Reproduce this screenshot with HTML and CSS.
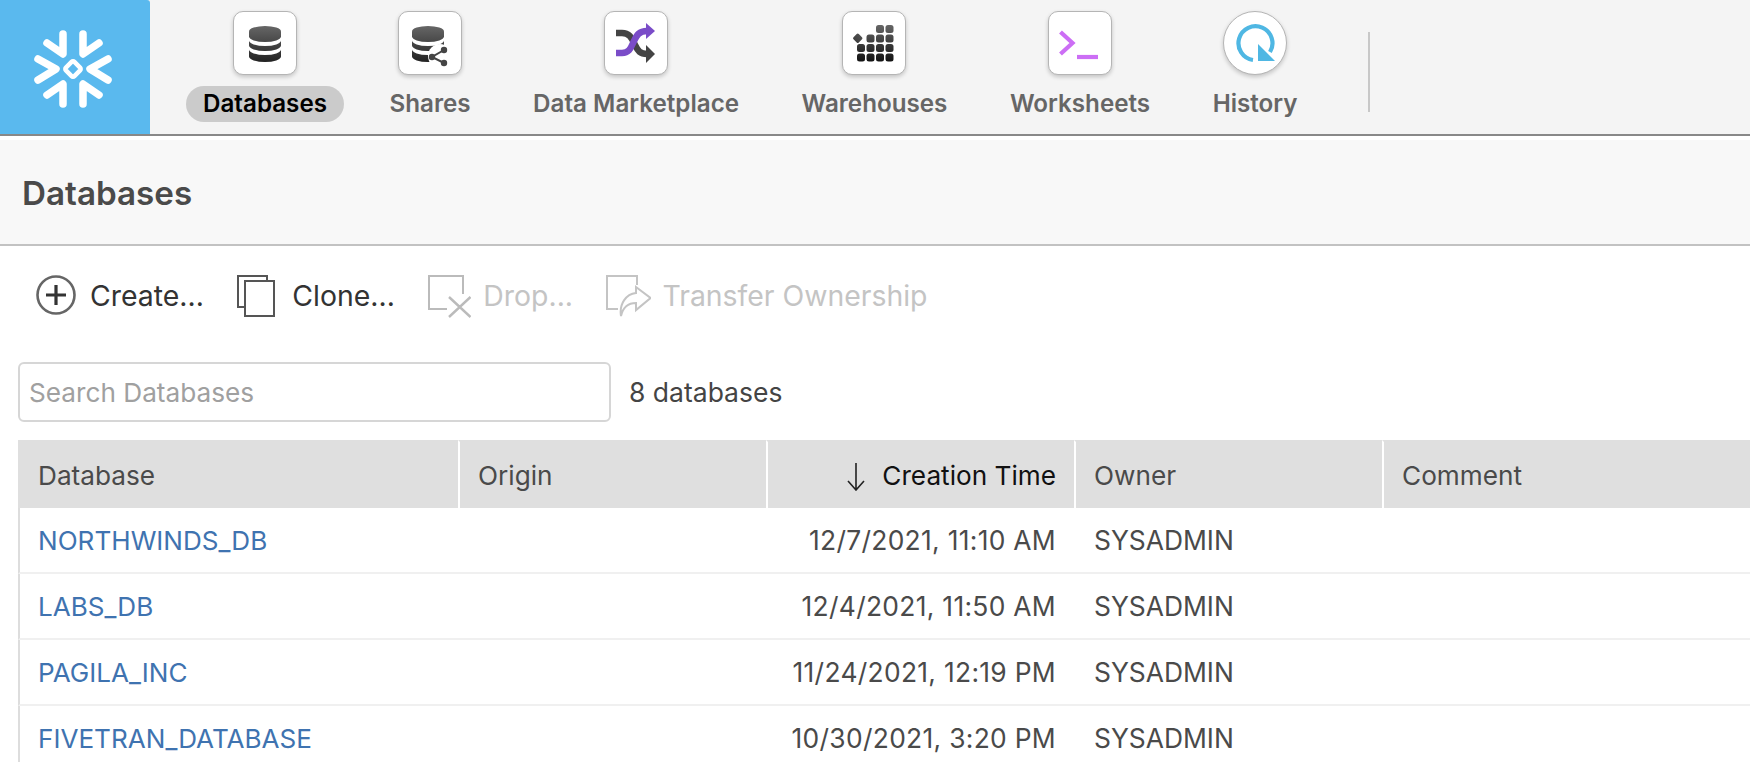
FILE: index.html
```html
<!DOCTYPE html>
<html lang="en">
<head>
  <meta charset="UTF-8" />
  <title>Databases</title>
  <link rel="stylesheet" href="styles.css">
</head>
<body>

<header class="topbar">
  <a class="logo">
    <svg width="150" height="134" viewBox="0 0 150 134" fill="none" stroke="#fff" stroke-width="7.5" stroke-linecap="round" stroke-linejoin="round">
      <path d="M47 43 63 54V34" />
      <path d="M99 43 83 54V34" />
      <path d="M38 59 56 69 38 80" />
      <path d="M108 59 90 69 108 80" />
      <path d="M47 95 63 84V104" />
      <path d="M99 95 83 84V104" />
      <rect x="67" y="63" width="12" height="12" rx="2" stroke-width="4.5" transform="rotate(45 73 69)" />
    </svg>
  </a>
  <nav class="nav">
    <a class="nav-item active">
      <span class="tile">
        <svg width="64" height="64" viewBox="0 0 64 64">
          <defs><linearGradient id="g1" gradientUnits="userSpaceOnUse" x1="0" y1="15" x2="0" y2="51"><stop offset="0" stop-color="#666" /><stop offset="1" stop-color="#222" /></linearGradient></defs>
          <path fill="url(#g1)" d="M16 20.5a16 5.5 0 0 1 32 0v5a16 5.5 0 0 1-32 0z" />
          <path fill="url(#g1)" d="M16 29.5a16 5.5 0 0 0 32 0v5a16 5.5 0 0 1-32 0z" />
          <path fill="url(#g1)" d="M16 38.5a16 5.5 0 0 0 32 0v7a16 5.5 0 0 1-32 0z" />
        </svg>
      </span>
      <span class="nav-label">Databases</span>
    </a>
    <a class="nav-item">
      <span class="tile">
        <svg width="64" height="64" viewBox="0 0 64 64">
          <defs><linearGradient id="g2" gradientUnits="userSpaceOnUse" x1="0" y1="15" x2="0" y2="51"><stop offset="0" stop-color="#666" /><stop offset="1" stop-color="#222" /></linearGradient></defs>
          <path fill="url(#g2)" d="M14 20.5a16 5.5 0 0 1 32 0v5a16 5.5 0 0 1-32 0z" />
          <path fill="url(#g2)" d="M14 29.5a16 5.5 0 0 0 32 0v5a16 5.5 0 0 1-32 0z" />
          <path fill="url(#g2)" d="M14 38.5a16 5.5 0 0 0 32 0v7a16 5.5 0 0 1-32 0z" />
          <circle cx="42" cy="45" r="12" fill="#fff" />
          <path d="M46 39 34 46 46 52" fill="none" stroke="#444" stroke-width="2" />
          <circle cx="46" cy="39" r="3.2" fill="#444" />
          <circle cx="34" cy="46" r="3.2" fill="#444" />
          <circle cx="46" cy="52" r="3.2" fill="#444" />
        </svg>
      </span>
      <span class="nav-label">Shares</span>
    </a>
    <a class="nav-item">
      <span class="tile">
        <svg width="64" height="64" viewBox="0 0 64 64">
          <path d="M12 22h6c8 0 10 6 13 12 3 6 5 9 12 9" fill="none" stroke="#444" stroke-width="6.5" />
          <path d="M42 34 51 43 42 52z" fill="#444" />
          <path d="M12 42h6c8 0 9-6 12-12 3-6 5-10 13-10" fill="none" stroke="#7a4cc8" stroke-width="6.5" />
          <path d="M42 12 51 20 42 28z" fill="#7a4cc8" />
        </svg>
      </span>
      <span class="nav-label">Data Marketplace</span>
    </a>
    <a class="nav-item">
      <span class="tile">
        <svg width="64" height="64" viewBox="0 0 64 64">
          <defs><linearGradient id="g3" gradientUnits="userSpaceOnUse" x1="0" y1="14" x2="0" y2="51"><stop offset="0" stop-color="#666" /><stop offset="1" stop-color="#111" /></linearGradient></defs>
          <g fill="url(#g3)">
            <rect x="34" y="14" width="8" height="8" rx="2.5" /><rect x="43.5" y="14" width="8" height="8" rx="2.5" />
            <rect x="12" y="23.5" width="7.5" height="7.5" rx="1.5" transform="rotate(45 15.75 27.25)" />
            <rect x="24.5" y="23.5" width="8" height="8" rx="2.5" /><rect x="34" y="23.5" width="8" height="8" rx="2.5" /><rect x="43.5" y="23.5" width="8" height="8" rx="2.5" />
            <rect x="15" y="33" width="8" height="8" rx="2.5" /><rect x="24.5" y="33" width="8" height="8" rx="2.5" /><rect x="34" y="33" width="8" height="8" rx="2.5" /><rect x="43.5" y="33" width="8" height="8" rx="2.5" />
            <rect x="15" y="42.5" width="8" height="8" rx="2.5" /><rect x="24.5" y="42.5" width="8" height="8" rx="2.5" /><rect x="34" y="42.5" width="8" height="8" rx="2.5" /><rect x="43.5" y="42.5" width="8" height="8" rx="2.5" />
          </g>
        </svg>
      </span>
      <span class="nav-label">Warehouses</span>
    </a>
    <a class="nav-item">
      <span class="tile">
        <svg width="64" height="64" viewBox="0 0 64 64" fill="none" stroke="#cc6ef5" stroke-width="4.2">
          <path d="M12.5 21 24.5 32 12.5 43" />
          <path d="M29 46H50" />
        </svg>
      </span>
      <span class="nav-label">Worksheets</span>
    </a>
    <a class="nav-item">
      <span class="tile round">
        <svg width="64" height="64" viewBox="0 0 64 64">
          <path d="M30 49A17 17 0 1 1 47 41" fill="none" stroke="#4fb7e3" stroke-width="4.2" />
          <path d="M35 33V50H52z" fill="#4fb7e3" />
        </svg>
      </span>
      <span class="nav-label">History</span>
    </a>
    <span class="nav-sep"></span>
  </nav>
</header>

<div class="page-title"><h1>Databases</h1></div>

<div class="toolbar">
  <a class="tool">
    <svg width="42" height="44" viewBox="0 0 42 44" fill="none">
      <circle cx="20" cy="21" r="18.5" stroke="#666" stroke-width="2.6" />
      <path d="M20 11V31M10 21H30" stroke="#333" stroke-width="3.2" />
    </svg>
    Create...
  </a>
  <a class="tool">
    <svg width="44" height="44" viewBox="0 0 44 44" fill="none" stroke="#555" stroke-width="2">
      <path d="M8 33H2V2H31V7" />
      <rect x="9" y="7" width="29" height="35" fill="#fff" />
    </svg>
    Clone...
  </a>
  <a class="tool off">
    <svg width="44" height="44" viewBox="0 0 44 44" fill="none" stroke="#bbb" stroke-width="2">
      <path d="M20 35H2V2H36V20" />
      <path d="M22 23 43.5 43M43.5 23 22 43" stroke-width="2.4" />
    </svg>
    Drop...
  </a>
  <a class="tool off">
    <svg width="45" height="44" viewBox="0 0 45 44" fill="none" stroke="#c4c4c4" stroke-width="2">
      <path d="M12 35H1V2H31V11" />
      <path d="M30 13 44.5 24 30 36V29C23 29 17 33 15 42 13 30 20 20 30 19z" />
    </svg>
    Transfer Ownership
  </a>
</div>

<div class="search-row">
  <input class="search" type="text" placeholder="Search Databases" />
  <span class="count">8 databases</span>
</div>

<table class="grid">
  <colgroup>
    <col class="col-name"><col class="col-mid"><col class="col-mid"><col class="col-mid"><col>
  </colgroup>
  <thead>
    <tr>
      <th>Database</th>
      <th>Origin</th>
      <th class="num sorted">
        <svg class="sort-arrow" width="20" height="28" viewBox="0 0 20 28" fill="none" stroke="#222" stroke-width="1.6"><path d="M10 0V26M2 18 10 27 18 18" /></svg>
        Creation Time
      </th>
      <th>Owner</th>
      <th>Comment</th>
    </tr>
  </thead>
  <tbody>
    <tr><td><a>NORTHWINDS_DB</a></td><td></td><td class="num">12/7/2021, 11:10 AM</td><td>SYSADMIN</td><td></td></tr>
    <tr><td><a>LABS_DB</a></td><td></td><td class="num">12/4/2021, 11:50 AM</td><td>SYSADMIN</td><td></td></tr>
    <tr><td><a>PAGILA_INC</a></td><td></td><td class="num">11/24/2021, 12:19 PM</td><td>SYSADMIN</td><td></td></tr>
    <tr><td><a>FIVETRAN_DATABASE</a></td><td></td><td class="num">10/30/2021, 3:20 PM</td><td>SYSADMIN</td><td></td></tr>
  </tbody>
</table>

</body>
</html>
```

FILE: styles.css
```css
html, body {
  margin: 0;
  height: 100%;
  overflow: hidden;
}
body {
  font-family: Inter, "Noto Sans", sans-serif;
  font-size: 26.4px;
  color: #4a4a4a;
  background: #fff;
}
.topbar {
  display: flex;
  height: 134px;
  background: #f4f4f4;
  border-bottom: 2px solid #888;
  margin-bottom: 4px;
}
.logo {
  display: block;
  width: 150px;
  height: 134px;
  background: #5ab9ee;
  border-top-right-radius: 3px;
}
.nav {
  display: flex;
  gap: 28.5px;
  padding-left: 36px;
}
.nav-item {
  display: flex;
  flex-direction: column;
  align-items: center;
  padding-top: 11px;
}
.tile {
  display: block;
  width: 64px;
  height: 64px;
  box-sizing: border-box;
  background: #fff;
  border: 1px solid #b5b5b5;
  border-radius: 10px;
  box-shadow: 0 2px 4px rgba(0,0,0,0.2);
  margin-bottom: 11px;
}
.tile svg {
  display: block;
  margin: -1px;
}
.tile.round {
  border-radius: 50%;
}
.nav-label {
  height: 36px;
  line-height: 36px;
  padding: 0 17px;
  border-radius: 18px;
  font-size: 24.2px;
  font-weight: 600;
  color: #666;
  white-space: nowrap;
}
.nav-item.active .nav-label {
  background: #cbcbcb;
  color: #000;
}
.nav-sep {
  width: 2px;
  height: 80px;
  margin: 32px 0 0 25px;
  background: #c8c8c8;
}
.page-title {
  box-sizing: border-box;
  height: 106px;
  display: flex;
  align-items: center;
  padding: 2px 0 0 22px;
  background: #f8f8f8;
  border-bottom: 2px solid #c2c2c2;
}
.page-title h1 {
  margin: 0;
  font-size: 33.2px;
  font-weight: 600;
  color: #4a4a4a;
}
.toolbar {
  display: flex;
  align-items: center;
  gap: 32.5px;
  height: 100px;
  padding-left: 36px;
}
.tool {
  display: flex;
  align-items: center;
  gap: 12px;
  font-size: 28.4px;
  line-height: 40px;
  color: #333;
  white-space: nowrap;
}
.tool.off {
  color: #c4c4c4;
}
.search-row {
  display: flex;
  align-items: center;
  gap: 18px;
  margin: 16px 0 18px 18px;
}
.search {
  width: 593px;
  height: 60px;
  box-sizing: border-box;
  padding: 0 9px;
  border: 2px solid #d6d6d6;
  border-radius: 6px;
  font-family: inherit;
  font-size: 26.2px;
  outline: none;
}
.search::placeholder {
  color: #a0a0a0;
}
.count {
  font-size: 26.5px;
  color: #444;
}
.grid {
  width: 1732px;
  margin-left: 18px;
  table-layout: fixed;
  border-collapse: separate;
  border-spacing: 0;
}
.col-name {
  width: 440px;
}
.col-mid {
  width: 308px;
}
.grid th {
  height: 66px;
  padding: 0 18px;
  font-weight: 400;
  font-size: 26.2px;
  text-align: left;
  background: #dfdfdf;
  border-top: 2px solid #dfdfdf;
  border-left: 2px solid #fff;
  color: #4a4a4a;
}
.grid th:first-child {
  border-left: 0;
  padding-left: 20px;
}
.grid .num {
  text-align: right;
}
.grid td.num {
  letter-spacing: 0.3px;
}
.grid th.sorted {
  color: #111;
}
.sort-arrow {
  vertical-align: -6px;
  margin-right: 9px;
}
.grid td {
  height: 64px;
  padding: 0 18px 0 20px;
  border-bottom: 2px solid #f0f0f0;
  white-space: nowrap;
}
.grid td:first-child {
  border-left: 2px solid #ddd;
  padding-left: 18px;
}
.grid td a {
  font-size: 26.1px;
  color: #3f73b0;
}
```
